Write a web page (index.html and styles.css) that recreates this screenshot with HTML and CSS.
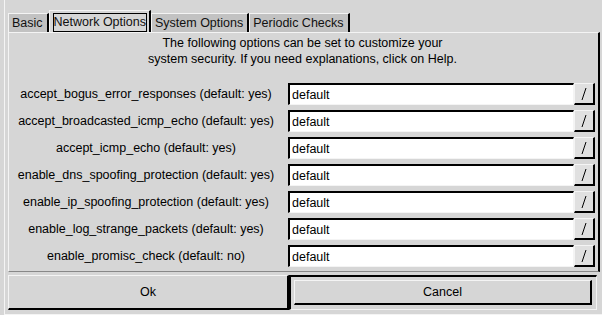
FILE: index.html
```html
<!DOCTYPE html>
<html lang="en">
<head>
  <meta charset="UTF-8" />
  <title>Security Options</title>
  <link rel="stylesheet" href="styles.css">
</head>
<body>
  <div class="window">
    <div class="notebook">
      <div class="tabs">
        <div class="tab">Basic</div>
        <div class="tab active"><span class="focus">Network Options</span></div>
        <div class="tab">System Options</div>
        <div class="tab">Periodic Checks</div>
      </div>
      <div class="panel">
        <p class="intro">The following options can be set to customize your<br>system security. If you need explanations, click on Help.</p>
        <div class="rows">
          <div class="row">
            <label>accept_bogus_error_responses (default: yes)</label>
            <div class="combo"><input value="default"><button class="arrow"><svg width="8" height="14" viewBox="0 0 8 14"><path d="M6 1 L2 13" stroke="#000" stroke-width="1"/></svg></button></div>
          </div>
          <div class="row">
            <label>accept_broadcasted_icmp_echo (default: yes)</label>
            <div class="combo"><input value="default"><button class="arrow"><svg width="8" height="14" viewBox="0 0 8 14"><path d="M6 1 L2 13" stroke="#000" stroke-width="1"/></svg></button></div>
          </div>
          <div class="row">
            <label>accept_icmp_echo (default: yes)</label>
            <div class="combo"><input value="default"><button class="arrow"><svg width="8" height="14" viewBox="0 0 8 14"><path d="M6 1 L2 13" stroke="#000" stroke-width="1"/></svg></button></div>
          </div>
          <div class="row">
            <label>enable_dns_spoofing_protection (default: yes)</label>
            <div class="combo"><input value="default"><button class="arrow"><svg width="8" height="14" viewBox="0 0 8 14"><path d="M6 1 L2 13" stroke="#000" stroke-width="1"/></svg></button></div>
          </div>
          <div class="row">
            <label>enable_ip_spoofing_protection (default: yes)</label>
            <div class="combo"><input value="default"><button class="arrow"><svg width="8" height="14" viewBox="0 0 8 14"><path d="M6 1 L2 13" stroke="#000" stroke-width="1"/></svg></button></div>
          </div>
          <div class="row">
            <label>enable_log_strange_packets (default: yes)</label>
            <div class="combo"><input value="default"><button class="arrow"><svg width="8" height="14" viewBox="0 0 8 14"><path d="M6 1 L2 13" stroke="#000" stroke-width="1"/></svg></button></div>
          </div>
          <div class="row">
            <label>enable_promisc_check (default: no)</label>
            <div class="combo"><input value="default"><button class="arrow"><svg width="8" height="14" viewBox="0 0 8 14"><path d="M6 1 L2 13" stroke="#000" stroke-width="1"/></svg></button></div>
          </div>
        </div>
      </div>
    </div>
    <div class="actions">
      <button class="btn">Ok</button>
      <div class="default-frame"><button class="btn">Cancel</button></div>
    </div>
  </div>
</body>
</html>
```

FILE: styles.css
```css
* {
  box-sizing: border-box; margin: 0; padding: 0;
}
body {
  width: 602px;
  height: 315px;
  background: #d6d6d6;
  font-family: 'Liberation Sans', Arial, sans-serif;
  font-size: 12.5px;
  color: #000;
  overflow: hidden;
}
.window {
  height: 315px;
  padding: 9px 2px 3px 6px;
  border-left: 1px solid #f4f4f4;
  margin-left: 4px;
  border-bottom: 1px solid #f4f4f4;
  display: flex;
  flex-direction: column;
}
.notebook {
  display: flex;
  flex-direction: column;
  margin-left: -3px;
}
.tabs {
  display: flex;
  align-items: flex-end;
  height: 23px;
}
.tab {
  height: 19px;
  padding: 0 4px 0 3px;
  line-height: 18px;
  background: #c2c2c2;
  border-top: 1px solid #f4f4f4;
  border-left: 1px solid #f4f4f4;
  border-right: 2px solid #000;
  color: #111;
}
.tab.active {
  height: 23px;
  background: #d6d6d6;
  padding: 2px 2px 0 3px;
  margin-bottom: -1px;
}
.focus {
  display: block;
  border: 1px solid #000;
  padding: 0;
  height: 19px;
  line-height: 17px;
}
.panel {
  height: 240px;
  border-top: 1px solid #f4f4f4;
  border-left: 1px solid #f4f4f4;
  border-right: 2px solid #000;
  border-bottom: 1px solid #888;
  padding: 2px 3px 0 1px;
}
.intro {
  text-align: center;
  line-height: 16px;
  white-space: nowrap;
}
.rows {
  display: flex;
  flex-direction: column;
  gap: 5px;
  margin-top: 16px;
}
.row {
  display: flex;
  align-items: center;
  height: 22px;
}
.row label {
  width: 272px;
  margin-right: 6px;
  text-align: center;
  white-space: nowrap;
}
.combo {
  flex: 1;
  display: flex;
  height: 22px;
}
.combo input {
  flex: 1;
  min-width: 0;
  height: 22px;
  border-top: 2px solid #000;
  border-left: 2px solid #000;
  border-right: 1px solid #f4f4f4;
  border-bottom: 1px solid #f4f4f4;
  background: #fff;
  font-family: inherit;
  font-size: 12.5px;
  padding: 1px 2px 0;
  outline: none;
}
.arrow {
  width: 21px;
  height: 22px;
  background: #e0e0e0;
  border-top: 1px solid #f4f4f4;
  border-left: 1px solid #f4f4f4;
  border-right: 2px solid #000;
  border-bottom: 2px solid #000;
  display: flex;
  align-items: center;
  justify-content: center;
}
.actions {
  display: flex;
  margin-top: 3px;
  margin-left: -3px;
  height: 35px;
}
.btn {
  font-family: inherit;
  font-size: 12.5px;
  background: #d6d6d6;
  border-top: 1px solid #f4f4f4;
  border-left: 1px solid #f4f4f4;
  border-right: 2px solid #000;
  border-bottom: 2px solid #000;
  color: #000;
}
.actions > .btn {
  width: 281px;
  height: 35px;
}
.default-frame {
  flex: 1;
  border-top: 2px solid #000;
  border-left: 2px solid #000;
  border-right: 1px solid #f4f4f4;
  border-bottom: 1px solid #f4f4f4;
  padding: 3px 4px 4px 3px;
  margin-right: 3px;
  display: flex;
}
.default-frame .btn {
  flex: 1;
}
```
